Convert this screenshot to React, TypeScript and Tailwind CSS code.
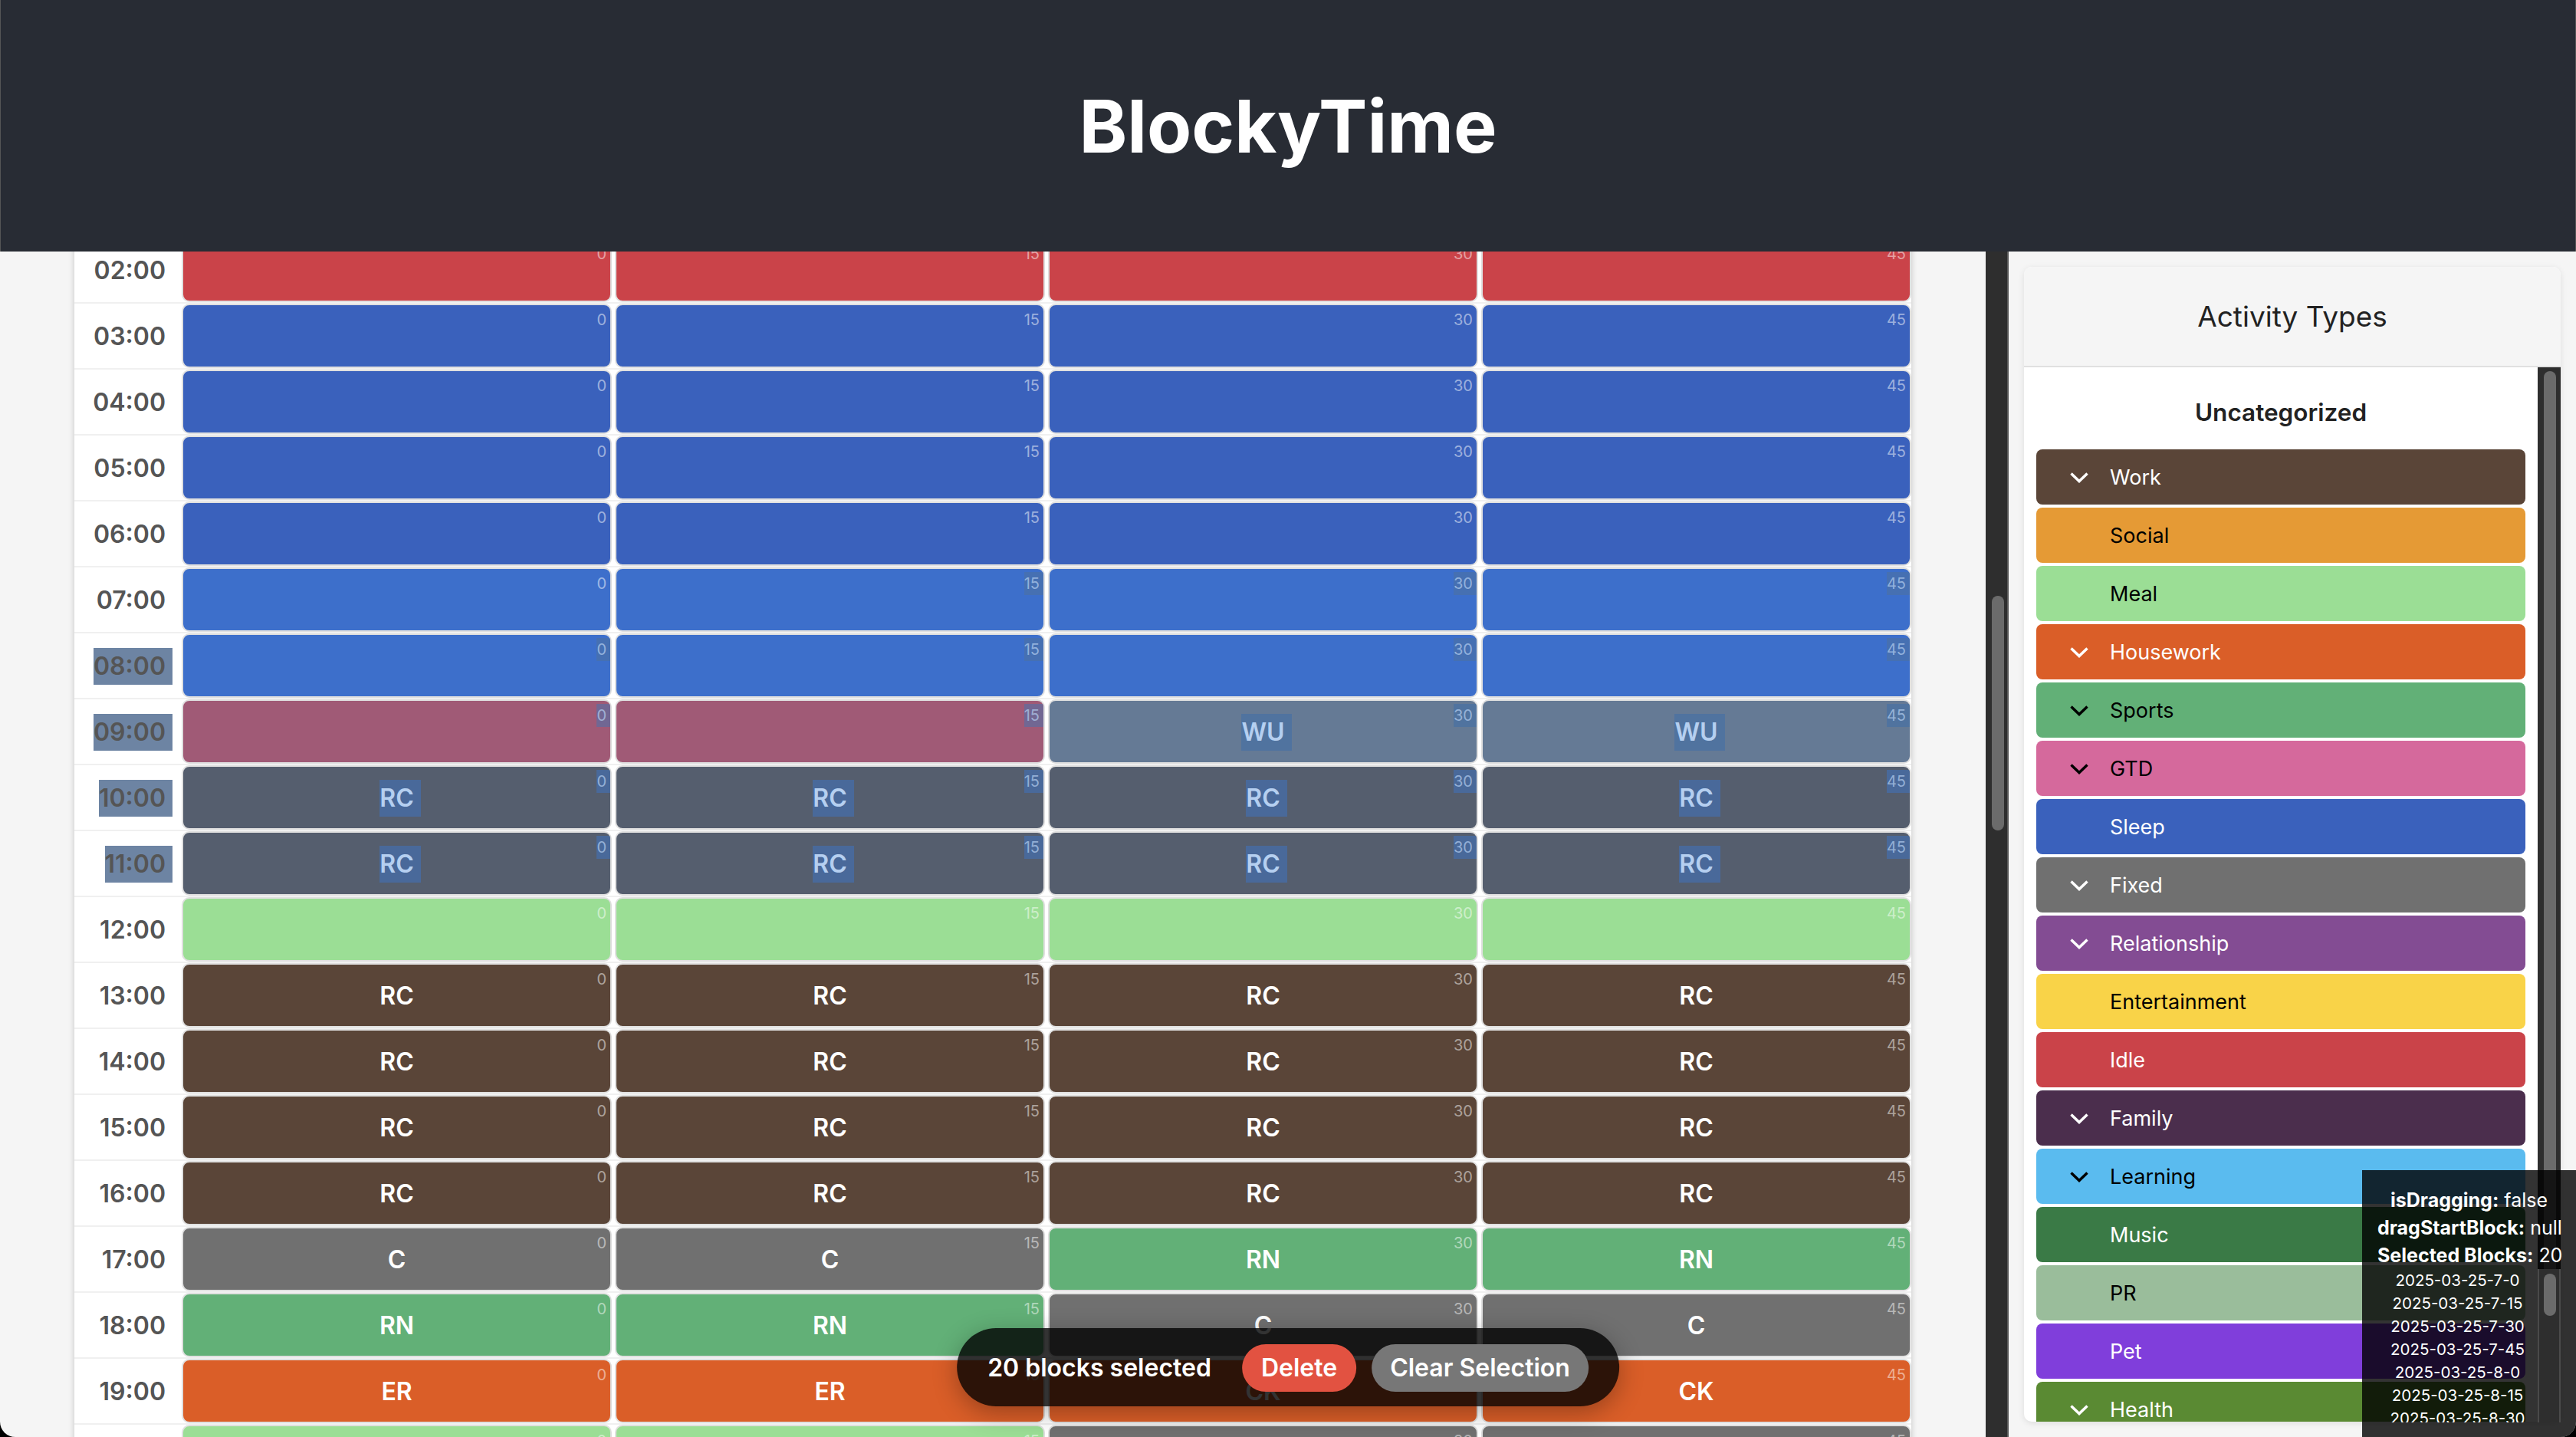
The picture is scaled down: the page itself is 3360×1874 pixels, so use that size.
import React from "react";

const IDLE = "bg-[#ca4349]";
const SLEEP = "bg-[#3a61bc]";
const SLEEP_SEL = "bg-[#3d6fcb]";
const PINK_SEL = "bg-[#a05a76]";
const WU_SEL = "bg-[#657a95]";
const RC_SEL = "bg-[#555e6e]";
const MEAL = "bg-[#9bde95]";
const WORK = "bg-[#5a4538]";
const GRAY = "bg-[#707070]";
const GREEN = "bg-[#62b077]";
const ORANGE = "bg-[#da5e28]";

// selection tint for each block colour
const selTint: Record<string, string> = {
  [SLEEP_SEL]: "bg-[#4670b2]",
  [PINK_SEL]: "bg-[#716793]",
  [WU_SEL]: "bg-[#50739f]",
  [RC_SEL]: "bg-[#49699a]",
};

type Block = { bg: string; label?: string; sel?: boolean };
type Row = { time: string; sel?: boolean; blocks: Block[] };

const same = (bg: string, label?: string, sel?: boolean): Block[] => [
  { bg, label, sel },
  { bg, label, sel },
  { bg, label, sel },
  { bg, label, sel },
];

const rows: Row[] = [
  { time: "02:00", blocks: same(IDLE) },
  { time: "03:00", blocks: same(SLEEP) },
  { time: "04:00", blocks: same(SLEEP) },
  { time: "05:00", blocks: same(SLEEP) },
  { time: "06:00", blocks: same(SLEEP) },
  {
    time: "07:00",
    blocks: [{ bg: SLEEP_SEL }, { bg: SLEEP_SEL, sel: true }, { bg: SLEEP_SEL, sel: true }, { bg: SLEEP_SEL, sel: true }],
  },
  { time: "08:00", sel: true, blocks: same(SLEEP_SEL, undefined, true) },
  {
    time: "09:00",
    sel: true,
    blocks: [
      { bg: PINK_SEL, sel: true },
      { bg: PINK_SEL, sel: true },
      { bg: WU_SEL, label: "WU", sel: true },
      { bg: WU_SEL, label: "WU", sel: true },
    ],
  },
  { time: "10:00", sel: true, blocks: same(RC_SEL, "RC", true) },
  { time: "11:00", sel: true, blocks: same(RC_SEL, "RC", true) },
  { time: "12:00", blocks: same(MEAL) },
  { time: "13:00", blocks: same(WORK, "RC") },
  { time: "14:00", blocks: same(WORK, "RC") },
  { time: "15:00", blocks: same(WORK, "RC") },
  { time: "16:00", blocks: same(WORK, "RC") },
  {
    time: "17:00",
    blocks: [{ bg: GRAY, label: "C" }, { bg: GRAY, label: "C" }, { bg: GREEN, label: "RN" }, { bg: GREEN, label: "RN" }],
  },
  {
    time: "18:00",
    blocks: [{ bg: GREEN, label: "RN" }, { bg: GREEN, label: "RN" }, { bg: GRAY, label: "C" }, { bg: GRAY, label: "C" }],
  },
  {
    time: "19:00",
    blocks: [{ bg: ORANGE, label: "ER" }, { bg: ORANGE, label: "ER" }, { bg: ORANGE, label: "CK" }, { bg: ORANGE, label: "CK" }],
  },
  {
    time: "20:00",
    blocks: [{ bg: MEAL }, { bg: MEAL }, { bg: GRAY }, { bg: GRAY }],
  },
];

const minutes = ["0", "15", "30", "45"];

const activities = [
  { name: "Work", bg: "bg-[#5a4538]", text: "text-white", open: true },
  { name: "Social", bg: "bg-[#e59a35]", text: "text-black" },
  { name: "Meal", bg: "bg-[#9bde95]", text: "text-black" },
  { name: "Housework", bg: "bg-[#da5e28]", text: "text-white", open: true },
  { name: "Sports", bg: "bg-[#62b077]", text: "text-black", open: true },
  { name: "GTD", bg: "bg-[#d5699c]", text: "text-black", open: true },
  { name: "Sleep", bg: "bg-[#3a61bc]", text: "text-white" },
  { name: "Fixed", bg: "bg-[#707070]", text: "text-white", open: true },
  { name: "Relationship", bg: "bg-[#834c93]", text: "text-white", open: true },
  { name: "Entertainment", bg: "bg-[#f9d348]", text: "text-black" },
  { name: "Idle", bg: "bg-[#ca4349]", text: "text-white" },
  { name: "Family", bg: "bg-[#4b2e4d]", text: "text-white", open: true },
  { name: "Learning", bg: "bg-[#5abbef]", text: "text-black", open: true },
  { name: "Music", bg: "bg-[#3a7a46]", text: "text-white" },
  { name: "PR", bg: "bg-[#9abd9b]", text: "text-black" },
  { name: "Pet", bg: "bg-[#803edb]", text: "text-white" },
  { name: "Health", bg: "bg-[#5a8a33]", text: "text-white", open: true },
];

const selectedIds = [7, 8, 9, 10, 11].flatMap((h) => minutes.map((m) => `2025-03-25-${h}-${m}`));

function Chevron() {
  return (
    <svg width="24" height="14" viewBox="0 0 24 14" fill="none" stroke="currentColor" strokeWidth="3.5" className="shrink-0">
      <path d="M1.5 1.5 L12 11.5 L22.5 1.5" />
    </svg>
  );
}

function TimeBlock({ block, minute }: { block: Block; minute: string }) {
  const tint = selTint[block.bg];
  return (
    <div className={`relative h-[84px] pt-[2px] border-2 border-[#e0e0e0] rounded-[10px] overflow-hidden flex items-center justify-center ${block.bg}`}>
      <span
        className={`absolute top-[4px] right-0 pr-[5px] text-[20px] leading-[30px] ${
          block.sel ? `${tint} text-[#b5cff0]/70` : "text-white/50"
        }`}
      >
        {minute}
      </span>
      {block.label &&
        (block.sel ? (
          <span className={`pr-[9px] -mr-[9px] text-[32px] leading-[48px] font-semibold text-[#b5cff0] ${tint}`}>{block.label}</span>
        ) : (
          <span className="text-[32px] leading-[48px] font-semibold text-white">{block.label}</span>
        ))}
    </div>
  );
}

export default function App() {
  return (
    <div className="h-screen bg-black overflow-hidden">
      <div className="relative h-full flex flex-col overflow-hidden rounded-b-[20px] bg-[#f5f5f5] font-['Inter',sans-serif]">
        {/* App title bar */}
        <header className="h-[328px] shrink-0 flex items-center justify-center bg-[#282c34] border-x border-[#555]">
          <h1 className="text-[95px] leading-none font-bold text-white">BlockyTime</h1>
        </header>

        <div className="flex flex-1 min-h-0">
          {/* Calendar */}
          <main className="flex-1 min-w-0 overflow-hidden">
            <div className="w-[2396px] mx-auto -mt-[18px] bg-white shadow-[0_0_8px_rgba(0,0,0,0.2)]">
              {rows.map((row) => (
                <div key={row.time} className="flex border-b-2 border-[#f0f0f0]">
                  <div className="w-[140px] shrink-0 pr-[21px] pt-[2px] flex items-center justify-end text-[32px] leading-[48px] font-semibold text-[#555]">
                    {row.sel ? <span className="pr-[9px] -mr-[9px] bg-[#6d84a3]">{row.time}</span> : row.time}
                  </div>
                  <div className="flex-1 grid grid-cols-4 gap-[4px]">
                    {row.blocks.map((block, i) => (
                      <TimeBlock key={i} block={block} minute={minutes[i]} />
                    ))}
                  </div>
                </div>
              ))}
            </div>
          </main>

          {/* main scrollbar */}
          <div className="w-[30px] shrink-0 bg-[#2e2e2e] border-r-2 border-[#5a5a5a] pl-[8px] pt-[449px]">
            <div className="w-[16px] h-[306px] rounded-full bg-[#6b6b6b]" />
          </div>

          {/* Activity types */}
          <aside className="w-[740px] shrink-0 p-[20px] flex">
            <div className="flex-1 flex flex-col rounded-[10px] overflow-hidden bg-white shadow-[0_2px_8px_rgba(0,0,0,0.1)]">
              <div className="h-[131px] shrink-0 flex items-center justify-center bg-[#f5f5f5] border-b-2 border-[#e0e0e0] text-[37px] text-[#222]">
                Activity Types
              </div>
              <div className="flex flex-1 min-h-0">
                <div className="flex-1 min-w-0 overflow-hidden px-[16px] pt-[35px]">
                  <h3 className="text-center text-[31.5px] leading-[48px] font-semibold text-[#222] mb-[24px]">Uncategorized</h3>
                  <div className="flex flex-col gap-[4px]">
                    {activities.map((a) => (
                      <div
                        key={a.name}
                        className={`h-[72px] shrink-0 pt-[2px] rounded-[8px] flex items-center gap-[28px] text-[27px] ${a.bg} ${a.text} ${a.open ? "pl-[44px]" : "pl-[96px]"}`}
                      >
                        {a.open && <Chevron />}
                        {a.name}
                      </div>
                    ))}
                  </div>
                </div>
                <div className="w-[30px] shrink-0 bg-[#2e2e2e] pl-[8px] pt-[5px] overflow-hidden">
                  <div className="w-[16px] h-[1300px] rounded-full bg-[#6b6b6b]" />
                </div>
              </div>
            </div>
          </aside>
        </div>

        {/* Selection action bar */}
        <div className="absolute bottom-[40px] left-1/2 -translate-x-1/2 h-[102px] px-[40px] pt-[2px] flex items-center rounded-[51px] bg-black/80 shadow-[0_8px_32px_rgba(0,0,0,0.3)] text-white text-[32px] font-semibold whitespace-nowrap">
          <span className="mr-[40px]">20 blocks selected</span>
          <button className="h-[62px] px-[25px] rounded-full bg-[#e25241] mr-[20px]">Delete</button>
          <button className="h-[62px] px-[24px] rounded-full bg-[#777]">Clear Selection</button>
        </div>

        {/* Debug panel */}
        <div className="absolute right-0 bottom-0 w-[279px] pt-[21px] px-[20px] pb-[19px] bg-black/80 text-white text-center text-[25px] leading-[36px] whitespace-nowrap">
          <div><strong className="font-bold">isDragging:</strong> false</div>
          <div><strong className="font-bold">dragStartBlock:</strong> null</div>
          <div><strong className="font-bold">Selected Blocks:</strong> 20</div>
          <div className="flex h-[200px]">
            <div className="flex-1 min-w-0 overflow-hidden text-[20.5px] leading-[30px]">
              {selectedIds.map((id) => (
                <div key={id}>{id}</div>
              ))}
            </div>
            <div className="w-[30px] shrink-0 bg-[#2e2e2e] border-x-2 border-[#4a4a4a] pl-[6px] pt-[6px]">
              <div className="w-[16px] h-[55px] rounded-full bg-[#6b6b6b]" />
            </div>
          </div>
        </div>
      </div>
    </div>
  );
}
